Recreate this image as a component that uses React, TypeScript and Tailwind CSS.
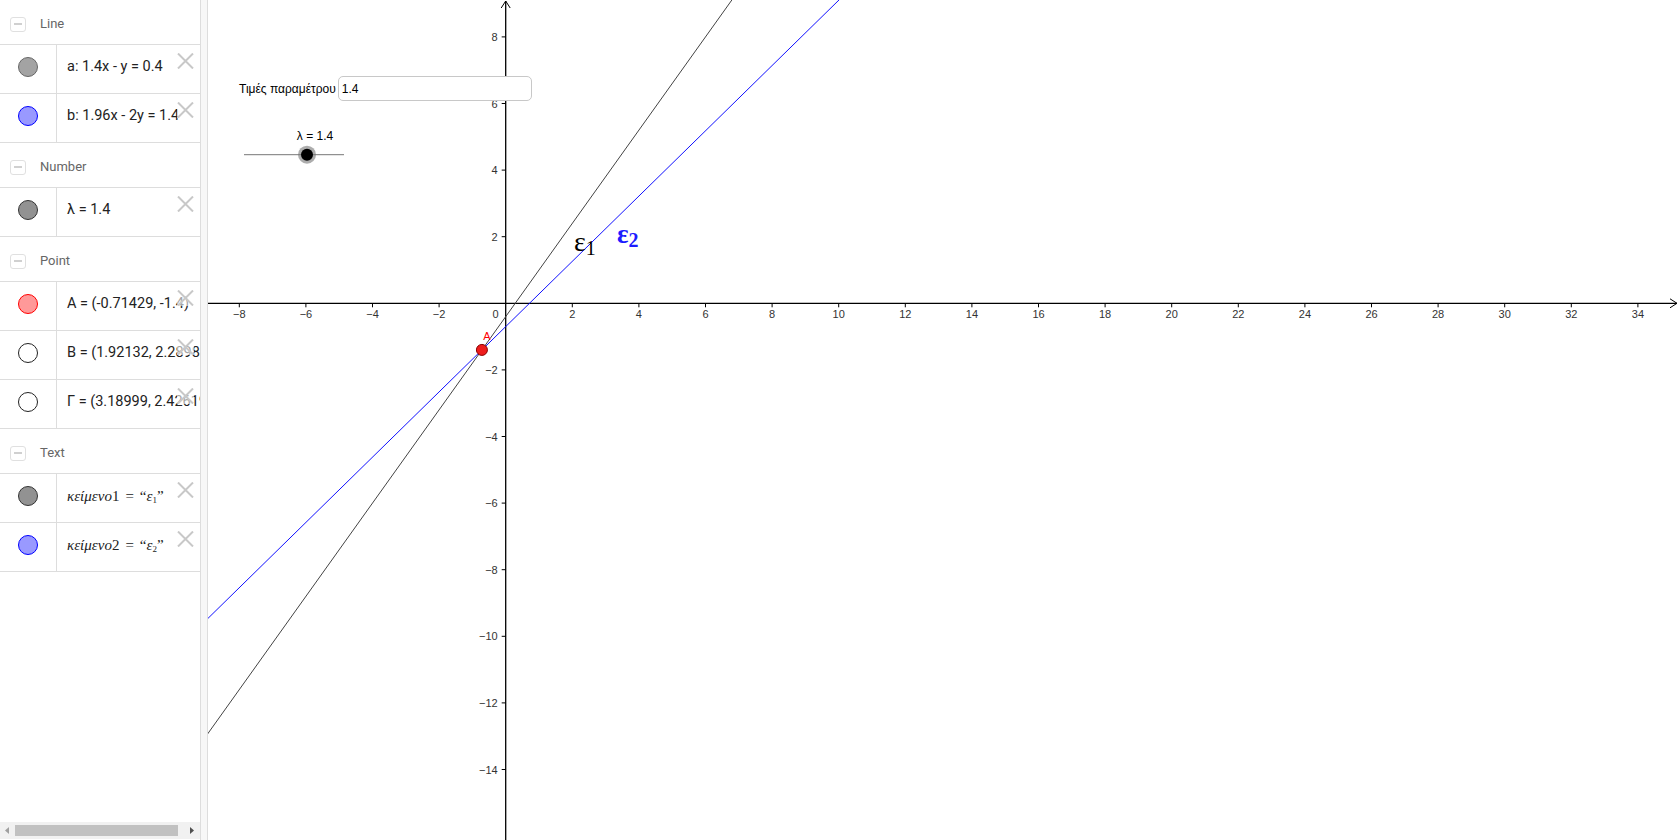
import React from 'react';

const U = 33.3;
const OX = 297.7;
const OY = 303.3;
const W = 1472;
const H = 840;

const px = (x: number) => OX + x * U;
const py = (y: number) => OY - y * U;

type Row = { fill: string; stroke: string; text: React.ReactNode };
type Group = { title: string; rows: Row[] };

const serif = { fontFamily: '"Liberation Serif", "DejaVu Serif", serif' };

function KText({ n }: { n: string }) {
  return (
    <span style={serif} className="text-[15px]">
      <i>κείμενο</i>
      {n}
      <span className="mx-[6px]">=</span>“<i>ε</i>
      <sub className="text-[9px]">{n}</sub>”
    </span>
  );
}

const groups: Group[] = [
  {
    title: 'Line',
    rows: [
      { fill: '#a3a3a3', stroke: '#666666', text: 'a: 1.4x - y = 0.4' },
      { fill: '#9999ff', stroke: '#0000ff', text: 'b: 1.96x - 2y = 1.4' },
    ],
  },
  {
    title: 'Number',
    rows: [{ fill: '#929292', stroke: '#333333', text: 'λ = 1.4' }],
  },
  {
    title: 'Point',
    rows: [
      { fill: '#ff9999', stroke: '#ff0000', text: 'A = (-0.71429, -1.4)' },
      { fill: '#ffffff', stroke: '#222222', text: 'B = (1.92132, 2.28984)' },
      { fill: '#ffffff', stroke: '#222222', text: 'Γ = (3.18999, 2.42619)' },
    ],
  },
  {
    title: 'Text',
    rows: [
      { fill: '#929292', stroke: '#333333', text: <KText n="1" /> },
      { fill: '#9999ff', stroke: '#0000ff', text: <KText n="2" /> },
    ],
  },
];

function CloseX() {
  return (
    <div className="absolute right-[6px] top-[8px] w-[17px] h-[16px] bg-white/60">
      <svg width="17" height="16" viewBox="0 0 17 16">
        <path d="M1 0.5 L16 15.5 M16 0.5 L1 15.5" stroke="#c8c8c8" strokeWidth="2" />
      </svg>
    </div>
  );
}

function Header({ title }: { title: string }) {
  return (
    <div className="h-[45px] border-b border-[#dddddd] flex items-center pt-[4px]">
      <div className="ml-[10px] w-[16px] h-[15px] rounded-[3px] border border-[#e0e0e0] flex items-center justify-center">
        <div className="w-[8px] h-[2px] bg-[#d0d0d0]" />
      </div>
      <span className="ml-[14px] text-[13px] text-[#666666]">{title}</span>
    </div>
  );
}

function ItemRow({ row }: { row: Row }) {
  return (
    <div className="relative h-[49px] border-b border-[#dddddd] flex">
      <div className="w-[57px] border-r border-[#dddddd] flex items-center justify-center shrink-0 pb-[4px]">
        <div
          className="w-[20px] h-[20px] rounded-full border"
          style={{ background: row.fill, borderColor: row.stroke }}
        />
      </div>
      <div className="flex-1 overflow-hidden whitespace-nowrap flex items-center pl-[10px] pb-[4px] text-[14.5px] text-[#222222]">
        {row.text}
      </div>
      <CloseX />
    </div>
  );
}

function Graphics() {
  const xt: number[] = [];
  for (let x = -8; x <= 34; x += 2) if (x !== 0) xt.push(x);
  const yt: number[] = [];
  for (let y = 8; y >= -14; y -= 2) if (y !== 0) yt.push(y);

  const lineA = (x: number) => 1.4 * x - 0.4;
  const lineB = (x: number) => 0.98 * x - 0.7;
  const x0 = -10;
  const x1 = 40;
  const label = (n: number) => (n < 0 ? '\u2212' + Math.abs(n) : String(n));

  return (
    <svg width={W} height={H} className="block" style={{ fontFamily: '"Liberation Sans", Arial, sans-serif' }}>
      {/* axes */}
      <line x1={0} y1={OY} x2={W - 3} y2={OY} stroke="#000" strokeWidth="1.3" />
      <path d={`M${W - 10} ${OY - 4.5} L${W - 3} ${OY} L${W - 10} ${OY + 4.5}`} fill="none" stroke="#000" strokeWidth="1" />
      <line x1={OX} y1={H} x2={OX} y2={1} stroke="#000" strokeWidth="1.3" />
      <path d={`M${OX - 4.5} 8 L${OX} 1 L${OX + 4.5} 8`} fill="none" stroke="#000" strokeWidth="1" />

      {xt.map((x) => (
        <g key={'x' + x}>
          <line x1={px(x)} y1={OY} x2={px(x)} y2={OY + 4} stroke="#000" strokeWidth="1" />
          <text x={px(x)} y={OY + 14.5} fontSize="11" textAnchor="middle" fill="#333">
            {label(x)}
          </text>
        </g>
      ))}
      {yt.map((y) => (
        <g key={'y' + y}>
          <line x1={OX - 4} y1={py(y)} x2={OX} y2={py(y)} stroke="#000" strokeWidth="1" />
          <text x={OX - 8} y={py(y) + 4} fontSize="11" textAnchor="end" fill="#333">
            {label(y)}
          </text>
        </g>
      ))}
      <text x={OX - 7} y={OY + 14.5} fontSize="11" textAnchor="end" fill="#333">
        0
      </text>

      {/* lines */}
      <line x1={px(x0)} y1={py(lineA(x0))} x2={px(x1)} y2={py(lineA(x1))} stroke="#444" strokeWidth="1" />
      <line x1={px(x0)} y1={py(lineB(x0))} x2={px(x1)} y2={py(lineB(x1))} stroke="#1010ff" strokeWidth="1" />

      {/* point A */}
      <circle cx={px(-0.71429)} cy={py(-1.4)} r="5.5" fill="#ee1c1c" stroke="#8a0000" strokeWidth="1" />
      <text x={px(-0.71429) + 5} y={py(-1.4) - 10} fontSize="11" textAnchor="middle" fill="#ff0000">
        A
      </text>

      {/* texts */}
      <text x={366} y={251} fill="#000" style={serif}>
        <tspan fontSize="28">ε</tspan>
        <tspan fontSize="20" dy="4">1</tspan>
      </text>
      <text x={409} y={243} fill="#1c1cff" fontWeight="bold" style={serif}>
        <tspan fontSize="27">ε</tspan>
        <tspan fontSize="20" dy="4">2</tspan>
      </text>

      {/* slider */}
      <text x={107} y={140} fontSize="12" textAnchor="middle" fill="#000">
        λ = 1.4
      </text>
      <line x1={36} y1={154.7} x2={136} y2={154.7} stroke="#777" strokeWidth="1" />
      <circle cx={99} cy={154.7} r="9" fill="#777" fillOpacity="0.6" />
      <circle cx={99} cy={154.7} r="6" fill="#000" />
    </svg>
  );
}

export default function App() {
  return (
    <div
      className="w-[1680px] h-[840px] flex bg-white overflow-hidden"
      style={{ fontFamily: 'Roboto, "Noto Sans", "Liberation Sans", sans-serif' }}
    >
      {/* algebra view */}
      <div className="w-[200px] h-full flex flex-col shrink-0">
        <div className="flex-1 overflow-hidden">
          {groups.map((g) => (
            <div key={g.title}>
              <Header title={g.title} />
              {g.rows.map((r, i) => (
                <ItemRow key={i} row={r} />
              ))}
            </div>
          ))}
        </div>
        <div className="h-[17px] mb-[1px] bg-[#f1f1f1] flex items-center">
          <svg width="15" height="17" viewBox="0 0 15 17" className="shrink-0">
            <path d="M5 8.5 L9 5 L9 12 Z" fill="#a0a0a0" />
          </svg>
          <div className="w-[163px] h-[11px] bg-[#c1c1c1]" />
          <div className="flex-1" />
          <svg width="15" height="17" viewBox="0 0 15 17" className="shrink-0">
            <path d="M5 5 L9 8.5 L5 12 Z" fill="#505050" />
          </svg>
        </div>
      </div>

      {/* splitter */}
      <div className="w-[8px] h-full border-l border-r border-[#dddddd] bg-[#f7f7f7] shrink-0" />

      {/* graphics view */}
      <div className="relative flex-1 h-full">
        <Graphics />
        <div
          className="absolute left-[31px] top-[76px] flex items-center gap-[2px]"
          style={{ fontFamily: '"Liberation Sans", Arial, sans-serif' }}
        >
          <span className="text-[12px] text-black">Τιμές παραμέτρου</span>
          <div className="w-[194px] h-[25px] rounded-[5px] border border-[#c8c8c8] bg-white flex items-center px-[3px] text-[12px] text-black">
            1.4
          </div>
        </div>
      </div>
    </div>
  );
}
